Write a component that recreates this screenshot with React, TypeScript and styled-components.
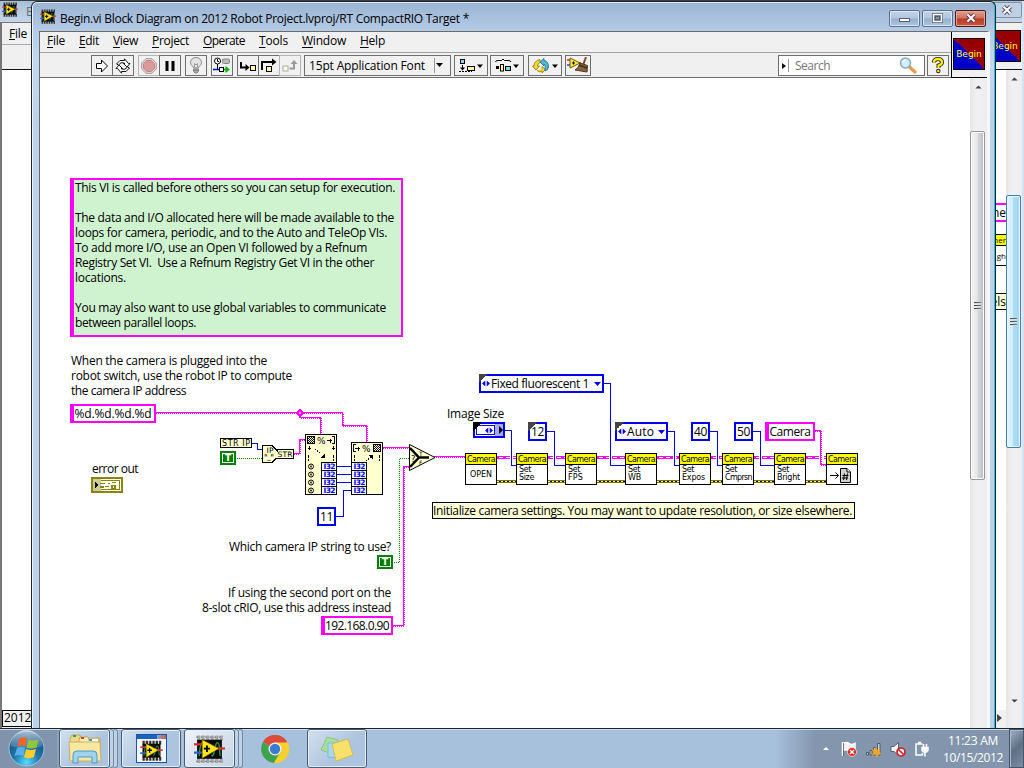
import React, { useLayoutEffect, useRef, useState } from 'react';
import styled, { createGlobalStyle, css } from 'styled-components';

const PINK = '#ff00ff';
const BLUE = '#0000f0';
const CREAM = '#ffffd0';
const UI = "'Open Sans', 'Noto Sans', sans-serif";
const SMALL = "'DejaVu Sans', sans-serif";

const Global = createGlobalStyle`
  * { box-sizing: border-box; }
  body { margin: 0; overflow: hidden; font: 12px/15px ${UI}; color: #000; }
  svg { display: block; }
`;

/* Text tracked so that it takes up a given width. */
const Run = styled.span`
  display: inline-block;
  white-space: pre;
`;
function Fit({ w, children }: { w: number; children: React.ReactNode }) {
  const ref = useRef<HTMLSpanElement>(null);
  const [ls, setLs] = useState(0);
  useLayoutEffect(() => {
    const el = ref.current!;
    const n = (el.textContent || '').length;
    setLs((w - el.getBoundingClientRect().width) / n);
  }, [w]);
  return <Run ref={ref} style={{ letterSpacing: `${ls}px` }}>{children}</Run>;
}

/* ---------- desktop ---------- */
const Screen = styled.div`
  width: 1024px; height: 768px;
  display: flex; flex-direction: column;
  background: #3a3f46;
`;
const Desktop = styled.div`
  position: relative; height: 728px; overflow: hidden; flex: none;
`;

/* ---------- rear window ---------- */
const RearWindow = styled.div`
  position: absolute; left: 0; top: 1px; width: 1024px; height: 727px;
  display: flex; flex-direction: column;
  background: linear-gradient(#a9bfd9, #c6d7e9 22px, #c9d9eb);
  border-right: 2px solid #d4e2f2;
`;
const RearTitle = styled.div`
  height: 21px; display: flex; align-items: center; padding: 0 0 4px 2px; flex: none;
  color: #66707c;
`;
const RearName = styled.div` margin-left: 8px; flex: 1; padding-top: 3px; `;
const RearClose = styled.div`
  width: 30px; height: 16px; border: 1px solid #8193aa; border-radius: 2px;
  background: #c0d0e3; display: flex; justify-content: center; align-items: center;
`;
const RearClient = styled.div`
  flex: 1; border: 1px solid #777; border-width: 1px 0 0 2px; background: #fff;
  display: flex; flex-direction: column; min-height: 0;
`;
const RearHead = styled.div`
  height: 47px; background: #f0f0f0; border-bottom: 1px solid #111; flex: none;
  display: flex; justify-content: space-between;
`;
const RearMenus = styled.div`
  flex: 1;
  border-bottom: 1px solid #aaa; height: 22px; padding: 3px 7px;
`;
const RearIcon = styled.div` padding: 7px 1px 0 0; `;
const RearBody = styled.div` flex: 1; display: flex; min-height: 0; `;
const RearPaper = styled.div`
  flex: 1; display: flex; flex-direction: column; justify-content: flex-end;
`;
const Peek = styled.div`
  display: flex; flex-direction: column; align-items: flex-end; flex: 1; padding-top: 133px;
`;
const PeekBox = styled.div<{ $h: number; $c: string; $bg: string; $gap?: number; $bw?: number; $fs?: number }>`
  width: 40px; height: ${p => p.$h}px; margin-top: ${p => p.$gap || 0}px;
  border: solid ${p => p.$c}; border-width: ${p => p.$bw || 1}px 0;
  background: ${p => p.$bg}; text-align: right; overflow: hidden;
  font-size: ${p => p.$fs || 12}px; line-height: ${p => p.$h - 2 * (p.$bw || 1)}px;
`;
const RearFoot = styled.div` display: flex; background: #f0f0f0; height: 18px; flex: none; `;
const RearStatus = styled.div`
  height: 17px; width: 100px; border: 1px solid #000; background: #f0f0f0; line-height: 14px; padding-left: 1px;
`;
const FootArrow = styled.div` margin-left: auto; width: 9px; padding-top: 4px; `;

/* ---------- scroll bars ---------- */
const Track = styled.div<{ $w: number }>`
  width: ${p => p.$w}px; background: linear-gradient(90deg, #e6e6e6, #f1f1f1 40%, #ededed);
  display: flex; flex-direction: column; align-items: flex-start; flex: none;
`;
const Arrow = styled.div<{ $h: number; $dir?: 'down' }>`
  height: ${p => p.$h}px; width: 16px; display: flex; justify-content: center; padding-top: 7px;
  svg { transform: ${p => (p.$dir === 'down' ? 'scaleY(-1)' : 'none')}; }
`;
const Thumb = styled.div<{ $h: number; $blue?: boolean }>`
  width: 15px; height: ${p => p.$h}px; border-radius: 2px;
  display: flex; flex-direction: column; justify-content: center; align-items: center; gap: 1px;
  border: 1px solid ${p => (p.$blue ? '#3c7fb1' : '#979797')};
  box-shadow: inset 0 0 0 1px ${p => (p.$blue ? '#e8f7ff' : '#fbfbfb')};
  background: ${p => p.$blue
    ? 'linear-gradient(90deg, #e3f4fc, #d0edfb 45%, #a9dcf5 50%, #a3d8f2)'
    : 'linear-gradient(90deg, #f5f5f5, #e6e6e8 45%, #d2d3d6 60%, #bbbdc0)'};
`;
const Grip = styled.i`
  width: 7px; height: 2px; background: linear-gradient(90deg, #444, #777); border-bottom: 1px solid #ddd;
`;
const Grips = () => <><Grip /><Grip /><Grip /></>;
const ArrowSvg = () => (
  <svg width="7" height="4" viewBox="0 0 8 5"><path d="M0 4.500L4 0.500L8 4.500Z" fill="#444" /></svg>
);

/* ---------- front window ---------- */
const Window = styled.div`
  position: absolute; left: 31px; top: 1px; width: 965px; height: 727px;
  padding: 0 5px 0 7px; display: flex; flex-direction: column;
  border: solid #222; border-width: 1px 1px 0 1px; border-radius: 6px 6px 0 0;
  background: linear-gradient(#9ab4d3, #b4cbe5 29px, #c3d8ee 60px, #bcd2ea 120px);
  box-shadow: inset 1px 0 #eaf3fc, inset -1px 0 #19c5ea, inset 0 1px #dce9f6;
`;
const TitleBar = styled.div`
  height: 29px; display: flex; align-items: center; padding: 0 4px 0 1px; flex: none;
`;
const TitleText = styled.div` flex: 1; margin-left: 4px; padding-top: 3px; `;
const Buttons = styled.div` display: flex; gap: 2px; padding-top: 3px; `;
const WinButton = styled.div<{ $close?: boolean }>`
  width: 31px; height: 17px; border-radius: 2px; display: flex; justify-content: center; align-items: center;
  border: 1px solid ${p => (p.$close ? '#4a1b1b' : '#5b7190')};
  box-shadow: inset 0 0 0 1px ${p => (p.$close ? '#eaa597' : '#d9e6f4')};
  background: ${p => p.$close
    ? 'linear-gradient(#e0a294, #cf705c 48%, #b93a22 52%, #c65a42)'
    : 'linear-gradient(#c3d4e8, #b1c6df 48%, #98b0cd 52%, #acc4de)'};
`;
const Client = styled.div`
  flex: 1; min-height: 0; border-left: 1px solid #6b6b6b; border-top: 1px solid #6b6b6b;
  border-right: 3px solid #f4f8fd; background: #fff; display: flex; flex-direction: column;
`;
const Head = styled.div` height: 46px; display: flex; flex: none; background: #f0f0f0; `;
const Bars = styled.div` flex: 1; display: flex; flex-direction: column; `;
const MenuBar = styled.div`
  height: 21px; border-bottom: 1px solid #a0a0a0; display: flex; padding: 1px 0 0 7px; flex: none;
`;
const MenuItem = styled.div<{ $w: number }>`
  width: ${p => p.$w}px;
  u { text-underline-offset: 2px; }
`;
const ToolBar = styled.div`
  flex: 1; display: flex; align-items: flex-start; padding-top: 2px;
  border-bottom: 1px solid #6b6b6b;
`;
const Tool = styled.div<{ $w?: number; $gap?: number; $dim?: boolean }>`
  width: ${p => p.$w || 22}px; height: 21px; margin-left: ${p => p.$gap ?? -1}px;
  border: 1px solid ${p => (p.$dim ? '#b5b5b5' : '#6e6e6e')}; background: #f1f1f1;
  display: flex; align-items: center; justify-content: center; flex: none;
`;
const FontPick = styled(Tool)` justify-content: space-between; padding: 0 7px 1px 4px; `;
const Divider = styled.i` width: 1px; height: 15px; background: #999; margin-left: 7px; `;
const SearchBox = styled(Tool)`
  margin-left: auto; background: #fff; justify-content: flex-start; color: #777; padding-left: 3px;
  svg:last-child { margin-left: auto; margin-right: 7px; }
`;
const SearchText = styled.div` padding-left: 6px; `;
const ViPane = styled.div`
  width: 36px; border-left: 1px solid #000; border-bottom: 1px solid #000; padding: 6px 0 0 1px;
`;
const ViBox = styled.div`
  width: 32px; height: 32px; border: 1px solid #000; color: #ffff30;
  background: linear-gradient(45deg, #0000c8 50%, #960000 50%);
  font: 9px/31px ${SMALL}; text-align: center;
`;
const Workspace = styled.div` flex: 1; display: flex; min-height: 0; `;
const Canvas = styled.div` flex: 1; position: relative; overflow: hidden; background: #fff; `;

/* ---------- diagram items; coordinates share the wire layer's system ---------- */
const at = css<{ $x: number; $y: number }>`
  position: absolute; left: ${p => p.$x - 40}px; top: ${p => p.$y - 78}px;
`;
const Wires = styled.svg` position: absolute; left: 0; top: 0; `;
const Label = styled.div<{ $x: number; $y: number }>` ${at} display: flex; flex-direction: column; `;
const RightLabel = styled(Label)` align-items: flex-end; `;
const Note = styled.div<{ $x: number; $y: number }>`
  ${at} width: 333px; height: 159px; padding-left: 1px; background: #cff3cf;
  border: 2px solid ${PINK}; border-left-width: 4px;
  display: flex; flex-direction: column; align-items: flex-start;
`;
const Gap = styled.div` height: 15px; `;
const Caption = styled.div<{ $x: number; $y: number }>`
  ${at} width: 423px; height: 17px; border: 1px solid #000; background: #ffffd8; line-height: 15px;
`;
const Const = styled.div<{ $x: number; $y: number; $w: number; $str?: boolean }>`
  ${at} width: ${p => p.$w}px; height: 19px; background: #fff; line-height: 15px;
  border: 2px solid ${p => (p.$str ? PINK : BLUE)};
  border-left-width: ${p => (p.$str ? 4 : 2)}px; padding-right: ${p => (p.$str ? 2 : 0)}px;
  display: flex; justify-content: center; align-items: center;
`;
const Ring = styled(Const)` justify-content: flex-start; gap: 1px; padding-left: 1px; `;
const Corner = styled.i<{ $dark?: boolean }>`
  position: absolute; left: -2px; top: -2px; width: 9px; height: 9px;
  background: linear-gradient(135deg, ${p => (p.$dark ? '#000' : '#444')} 50%, transparent 50%);
`;
const DropMark = styled.div` margin-left: auto; margin-right: 1px; `;
const Bool = styled.div<{ $x: number; $y: number }>`
  ${at} width: 16px; height: 14px; background: #008000; padding: 2px;
`;
const BoolFace = styled.div`
  height: 10px; border: 1px solid #fff; color: #fff; font: bold 9px/8px ${SMALL}; text-align: center;
`;
const SubVi = styled.div<{ $x: number; $y: number }>`
  ${at} width: 32px; height: 32px; border: 1px solid #000; background: #fff;
  font: 8px/8px ${SMALL}; display: flex; flex-direction: column; overflow: hidden;
`;
const SubHead = styled.div`
  height: 11px; background: #ffff00; border-bottom: 1px solid #000; line-height: 11px; padding-left: 1px; flex: none;
`;
const SubBody = styled.div<{ $mid?: boolean }>`
  flex: 1; display: flex; flex-direction: column; align-items: ${p => (p.$mid ? 'center' : 'flex-start')};
  justify-content: ${p => (p.$mid ? 'center' : 'flex-start')}; padding: ${p => (p.$mid ? '0' : '1px 0 0 2px')};
`;
const ImageSize = styled.div<{ $x: number; $y: number }>`
  ${at} width: 32px; height: 16px; border: 2px solid ${BLUE}; background: #fff; display: flex; padding: 1px 0 1px 1px;
`;
const EnumFace = styled.div`
  flex: 1; border: 1px solid ${BLUE}; display: flex; align-items: center; justify-content: flex-end; padding-right: 1px;
`;
const EnumEdge = styled.div`
  width: 8px; background: #a9a9f2; display: flex; align-items: center; justify-content: flex-end; margin: -1px 0;
`;

/* ---------- icons ---------- */
function LvIcon({ w, h, metal }: { w: number; h: number; metal?: boolean }) {
  return (
    <svg width={w} height={h} viewBox="0 0 30 28">
      <path d="M3 3.500H28M3 25H28" stroke={metal ? '#a5a5a5' : '#333'} strokeWidth="5" strokeDasharray="3 1.400" />
      <path d="M2 2.500H28M2 26H28" stroke={metal ? '#777' : '#999'} strokeWidth="1.300" strokeDasharray="1.500 2.900" />
      <rect x="3" y="5" width="24" height="18.500" fill="#0a0a0a" />
      <path d="M5 21C6 5 9 5 11 12M17 20C20 24 20 6 23 8S24 22 26 20" fill="none" stroke="#2c9a4b" strokeWidth="1.300" />
      <path d="M0 9.500H8" stroke="#e03030" strokeWidth="2.200" />
      <path d="M0 17.500H8" stroke="#3060d0" strokeWidth="2.200" />
      <path d="M21 13.500H30" stroke="#e03030" strokeWidth="2.200" />
      <path d="M8 5L24 13.500L8 23Z" fill="#ffe619" stroke="#806600" strokeWidth=".6" />
      <path d="M12.500 10.500V17M9.500 13.700H15.500" stroke="#000" strokeWidth="1.800" />
    </svg>
  );
}
const Caret = ({ c = '#000' }: { c?: string }) => (
  <svg width="7" height="4" viewBox="0 0 7 4"><path d="M0 0H7L3.500 4Z" fill={c} /></svg>
);
const Updown = () => (
  <svg width="8" height="7" viewBox="0 0 8 7"><path d="M3.300 .5V6.500L0 3.500ZM4.700 .5V6.500L8 3.500Z" fill={BLUE} /></svg>
);
const RunIcon = () => (
  <svg width="14" height="14" viewBox="0 0 14 14"><path d="M1.500 4.500H6.500V1L12.500 7L6.500 13V9.500H1.500Z" fill="#fff" stroke="#000" /></svg>
);
const RunLoopIcon = () => (
  <svg width="18" height="16" viewBox="0 0 18 16" fill="#fff" stroke="#111" strokeWidth="1">
    <path d="M2.500 6L6 2.500H10.500V.8L14.500 5.500H16L13 9L9.500 5.500H11L9.500 4.800H7L4.500 7Z" />
    <path d="M15.500 10L12 13.500H7.500V15.200L3.500 10.500H2L5 7L8.500 10.500H7L8.500 11.200H11L13.500 9Z" />
  </svg>
);
const StopIcon = () => (
  <svg width="16" height="16" viewBox="0 0 16 16">
    <path d="M5 .7H11L15.300 5V11L11 15.300H5L.7 11V5Z" fill="#e9dada" stroke="#999" />
    <path d="M5.700 2.500H10.300L13.500 5.700V10.300L10.300 13.500H5.700L2.500 10.300V5.700Z" fill="#d89a9a" stroke="#c58484" />
  </svg>
);
const PauseIcon = () => (
  <svg width="12" height="12" viewBox="0 0 12 12"><path d="M1.500 1H4.500V11H1.500ZM7.500 1H10.500V11H7.500Z" /></svg>
);
const BulbIcon = () => (
  <svg width="14" height="17" viewBox="0 0 14 17" stroke="#888">
    <path d="M4.500 11C4.500 9 1.500 8.500 1.500 5.500A5.500 5 0 0 1 12.500 5.500C12.500 8.500 9.500 9 9.500 11Z" fill="#e4e4e4" />
    <path d="M5.500 10.500V6.500L7 8L8.500 6.500V10.500" fill="none" strokeWidth=".8" />
    <path d="M4.500 12H9.500V14.500L8 16H6L4.500 14.500ZM4.500 13.500H9.500" fill="#aaa" />
  </svg>
);
const RetainIcon = () => (
  <svg width="18" height="17" viewBox="0 0 18 17" fill="none">
    <circle cx="4.500" cy="4" r="3" stroke="#000" fill="#fff" /><path d="M4.500 2V4.500H6M4.500 7V12" stroke="#000" />
    <rect x="9.500" y="2" width="7" height="4.500" rx="1" fill="#bbb" stroke="#888" />
    <path d="M0 12.500H7" stroke="#0000ff" strokeWidth="1.500" /><rect x="6.500" y="10.500" width="4" height="4" stroke="#000" fill="#fff" />
    <path d="M11 12.500H13" stroke="#009a00" strokeWidth="1.500" /><path d="M12.500 9L17 12.500L12.500 16Z" fill="#00b400" />
  </svg>
);
const StepInto = () => (
  <svg width="18" height="16" viewBox="0 0 18 16"><path d="M2 4V9.500H8" stroke="#000" strokeWidth="2" fill="none" /><path d="M6.500 6L10.500 9.500L6.500 13Z" /><rect x="11.500" y="7.500" width="5" height="5" fill="#ffffa8" stroke="#000" /></svg>
);
const StepOver = () => (
  <svg width="18" height="16" viewBox="0 0 18 16"><path d="M2 12V4H13" stroke="#000" strokeWidth="2" fill="none" /><path d="M12 .5L16.500 4L12 7.500Z" /><rect x="6.500" y="8.500" width="5" height="5" fill="#ffffa8" stroke="#000" /></svg>
);
const StepOut = () => (
  <svg width="18" height="16" viewBox="0 0 18 16"><rect x="2" y="8" width="5" height="5" fill="#ffffdf" stroke="#aaa" /><path d="M8.500 10.500H13V5" stroke="#999" strokeWidth="2" fill="none" /><path d="M9.500 6L13 2L16.500 6Z" fill="#999" /></svg>
);
const AlignIcon = () => (
  <svg width="25" height="16" viewBox="0 0 25 16"><rect x="1.500" y="1.500" width="4" height="4" fill="#7fd8f0" stroke="#000" /><path d="M3.500 7V11" stroke="#000" /><path d="M0 13.500H13" stroke="#000" strokeDasharray="2 1" /><path d="M1 9.500H6L3.500 12.500Z" /><rect x="8.500" y="8.500" width="7" height="4" fill="#ffffa0" stroke="#000" /><path d="M18 6.500H24L21 10Z" /></svg>
);
const DistIcon = () => (
  <svg width="25" height="16" viewBox="0 0 25 16"><path d="M.5 4Q.5 2.500 3 2.500H6.500L8 1L9.500 2.500H13Q16 2.500 16 4" fill="none" stroke="#000" /><rect x="1" y="8" width="3" height="3" /><rect x="5.500" y="6.500" width="3" height="6.500" fill="#ffffa0" stroke="#000" /><rect x="10.500" y="8.500" width="5" height="4" fill="#7fd8f0" stroke="#000" /><path d="M18 6.500H24L21 10Z" /></svg>
);
const ReorderIcon = () => (
  <svg width="27" height="16" viewBox="0 0 27 16">
    <path d="M8 1.500Q2 3 2 8L.5 8L4 12L7.500 8H5.500Q5.500 5 8 4.500Z" fill="#f5dc2a" stroke="#8a7600" strokeWidth=".8" />
    <path d="M5 12.500Q8 15 10 13V15L13.500 11.500L10 8.500V10.500" fill="#f5dc2a" stroke="#8a7600" strokeWidth=".8" />
    <path d="M8 4L12 .5V2.500Q16.500 3 16.500 9Q16 12.500 13 13V9.500Q14 7 12 6V8Z" fill="#52b6d8" stroke="#1f6c8a" strokeWidth=".8" />
    <path d="M20 6.500H26L23 10Z" />
  </svg>
);
const CleanIcon = () => (
  <svg width="22" height="17" viewBox="0 0 22 17">
    <path d="M0 3H4M14 6H11" stroke="#e02020" strokeWidth="1.500" /><path d="M0 8H3" stroke="#2040e0" strokeWidth="1.500" />
    <path d="M3 1L13 6L3 11Z" fill="#ffe83a" stroke="#6b5b00" /><path d="M5 6H8M6.500 4.500V7.500" stroke="#000" />
    <path d="M19 0L16.500 7" stroke="#7a5230" strokeWidth="2" /><path d="M13 6L20.500 8.500L20 15L8 13Q12 11 13 6Z" fill="#8a6238" stroke="#543816" /><path d="M12 8L20 11" stroke="#333" strokeWidth="1.500" />
  </svg>
);
const GlassIcon = () => (
  <svg width="18" height="17" viewBox="0 0 18 17"><path d="M10.500 10L16 15" stroke="#e79a4a" strokeWidth="3.200" strokeLinecap="round" /><circle cx="6.500" cy="6" r="5" fill="#cdefff" stroke="#86a6c4" strokeWidth="1.500" /><path d="M3.500 5.500Q4 3.500 6.500 3.200" stroke="#fff" strokeWidth="1.500" fill="none" /></svg>
);
const HelpIcon = () => (
  <svg width="12" height="17" viewBox="0 0 12 17"><path d="M2 5.500Q2 2 6 2T10 5.500Q10 7.500 6.500 8.500V11" fill="none" stroke="#222" strokeWidth="4" /><circle cx="6.300" cy="14" r="2.200" fill="#222" /><path d="M2 5.500Q2 2 6 2T10 5.500Q10 7.500 6.500 8.500V11" fill="none" stroke="#ffee00" strokeWidth="2.300" /><circle cx="6.300" cy="14" r="1.300" fill="#ffee00" /></svg>
);
const CrossIcon = ({ edge = '#4a4f5c' }: { edge?: string }) => (
  <svg width="12" height="10" viewBox="0 0 12 10"><path d="M2.500 1.500L9.500 8.500M9.500 1.500L2.500 8.500" stroke={edge} strokeWidth="4" /><path d="M2.500 1.500L9.500 8.500M9.500 1.500L2.500 8.500" stroke="#fff" strokeWidth="2" /></svg>
);

/* ---------- wires ---------- */
const StringWire = ({ d }: { d: string }) => (
  <g fill="none" stroke={PINK}>
    <path d={d} strokeWidth="2" strokeDasharray="1 1" />
    <path d={d} transform="translate(-.5 -.5)" strokeWidth="1" />
  </g>
);
const RefWire = ({ a, b }: { a: number; b: number }) => (
  <g><rect x={a} y="456" width={b - a} height="3" fill={PINK} /><path d={`M${a + 2} 457.500H${b}`} stroke="#fff" strokeDasharray="4 3" /></g>
);
const ErrWire = ({ a, b }: { a: number; b: number }) => (
  <g><rect x={a} y="480" width={b - a} height="3" fill="#7c7600" /><path d={`M${a} 481.500H${b}`} stroke="#fff46a" strokeDasharray="2 2" /><path d={`M${a + 2} 481.500H${b}`} stroke="#000" strokeDasharray="2 2" /></g>
);
const I32 = ({ x, y }: { x: number; y: number }) => (
  <g>
    <rect x={x + .5} y={y + .5} width="15" height="8" fill="#fff" stroke="#000" />
    <text x={x + 2.500} y={y + 7.300} fontFamily={SMALL} fontSize="7.500" fontWeight="700" textLength="12" fill={BLUE}>I32</text>
  </g>
);
const gaps: [number, number][] = [[497, 516], [548, 565], [597, 625], [657, 679], [711, 722], [754, 774], [806, 826]];
const blueWires = [
  'M604 383.500H610.500V465.500H625', 'M505 430.500H511.500V465.500H516', 'M547 431.500H554.500V465.500H565',
  'M668 431.500H674.500V465.500H679', 'M710 431.500H717.500V465.500H722', 'M753 431.500H760.500V465.500H774',
];

function WireLayer() {
  return (
    <Wires width="930" height="650" viewBox="40 78 930 650" shapeRendering="crispEdges">
      <defs>
        <pattern id="chk" width="2" height="2" patternUnits="userSpaceOnUse"><rect width="1" height="1" /><rect x="1" y="1" width="1" height="1" /></pattern>
      </defs>
      <StringWire d="M156 413H343V426H367V442" />
      <StringWire d="M300 413V418H321V434" />
      <path d="M300 410L303 413L300 416L297 413Z" fill="#ff9cff" stroke={PINK} strokeWidth="1.500" />
      <StringWire d="M294 454H300V440H305" />
      <StringWire d="M383 448H410" />
      <StringWire d="M409 467H404V626H393" />
      <StringWire d="M434 457H465" />
      {gaps.map(([a, b]) => <g key={a}><RefWire a={a} b={b} /><ErrWire a={a} b={b} /></g>)}
      {blueWires.map(d => (
        <g key={d} fill="none"><path d={d} stroke="#fff" strokeWidth="3" /><path d={d} stroke={BLUE} /></g>
      ))}
      <path d="M821.500 433V464" stroke="#fff" strokeWidth="5" />
      <StringWire d="M815 431H821V465H826" />
      <g fill="none" stroke={BLUE}>
        <path d="M252 443.500H257.500V449.500H262M337 466.500H351M337 474.500H351M337 482.500H351M351 490.500H343.500V516.500H336" />
      </g>
      <g fill="none" stroke="#008000" strokeDasharray="1 1">
        <path d="M237 458.500H262M409 458.500H399.500V562.500H393" />
      </g>

      {/* string-to-IP property and conversion nodes */}
      <rect x="220.500" y="438.500" width="31" height="9" fill={CREAM} stroke="#000" />
      <text x="222" y="446" fontFamily={SMALL} fontSize="8" textLength="28">STR IP</text>
      <path d="M262.500 445.500H272L277.500 451V457L272 462.500H262.500Z" fill={CREAM} stroke="#000" />
      <rect x="277.500" y="449.500" width="16" height="9" fill={CREAM} stroke="#000" />
      <path d="M275 451.500H279V458H275Z" fill={CREAM} />
      <text x="266.500" y="453" fontFamily={SMALL} fontSize="7.500" textLength="7">IP</text>
      <text x="264" y="461" fontFamily={SMALL} fontSize="8" textLength="10">".."</text>
      <text x="277.500" y="457" fontFamily={SMALL} fontSize="7.500" textLength="15">STR</text>

      {/* scan from string */}
      <rect x="305.500" y="434.500" width="31" height="60" fill={CREAM} stroke="#000" />
      <rect x="307.500" y="436.500" width="7" height="7" fill="url(#chk)" stroke="#000" />
      <text x="317" y="444" fontFamily={SMALL} fontSize="9">%</text>
      <path d="M327 440.500H332M330.500 438.500V443M332 436.500H334.500V443.500H332" stroke="#000" fill="none" />
      <path d="M309.500 446V450M308 448.500H311M333.500 446V450M332 448.500H335M308.500 455V458M308.500 459V460.500M333.500 455V458M333.500 459V460.500" stroke="#000" />
      <path d="M315 449L321 454" stroke="#000" strokeDasharray="1.400 1.400" /><path d="M325 453V458H320Z" />
      {[466, 474, 482, 490].map(y => <g key={y} shapeRendering="auto"><circle cx="311" cy={y + .5} r="2.500" fill="none" stroke="#000" /><circle cx="311" cy={y + .5} r=".9" /></g>)}
      {[462, 470, 478, 486].map(y => <I32 key={y} x={321} y={y} />)}

      {/* format into string */}
      <rect x="351.500" y="442.500" width="31" height="52" fill={CREAM} stroke="#000" />
      <path d="M356 444.500H353.500V451.500H356M355 448.500H360M358.500 446.500V450.500" stroke="#000" fill="none" />
      <text x="362" y="452" fontFamily={SMALL} fontSize="9">%</text>
      <rect x="373.500" y="444.500" width="7" height="7" fill="url(#chk)" stroke="#000" />
      <path d="M354.500 455V458M354.500 459V460.500M379.500 455V458M379.500 459V460.500" stroke="#000" />
      <path d="M366 461L371 457" stroke="#000" strokeDasharray="1.400 1.400" /><path d="M368 455H373V460Z" />
      {[462, 470, 478, 486].map(y => <I32 key={y} x={351} y={y} />)}

      {/* selector */}
      <g shapeRendering="auto">
        <path d="M409.500 444.500V470.500L435 457.500Z" fill={CREAM} stroke="#000" />
        <path d="M410 448L419 457.500H429M410 467L419 457.500" fill="none" stroke="#000" strokeWidth="2.500" />
        <text x="411" y="461.500" fontFamily={SMALL} fontSize="8.500">?</text>
        <text x="419" y="455.500" fontFamily={SMALL} fontSize="6">T</text>
        <text x="419" y="464.500" fontFamily={SMALL} fontSize="6">F</text>
      </g>

      {/* error cluster terminal */}
      <rect x="92" y="478" width="30" height="14" fill="#fff" stroke="#8a8400" strokeWidth="2" />
      <rect x="94.500" y="480.500" width="25" height="9" fill="none" stroke="#8a8400" />
      <rect x="93" y="479" width="8" height="12" fill="#cccb9c" /><path d="M95 482L99 485L95 488Z" />
      <path d="M100 483.500H105M100 487H104M108 483.500H110M112 482.500H116M105 486.500H109M112 485.500H115V488.500H112Z" stroke="#8a8400" strokeWidth="1.500" fill="none" />
    </Wires>
  );
}

const cameras: { x: number; a: string; b?: string; w: number }[] = [
  { x: 465, a: 'OPEN', w: 22 }, { x: 516, a: 'Set', b: 'Size', w: 15 }, { x: 565, a: 'Set', b: 'FPS', w: 15 },
  { x: 625, a: 'Set', b: 'WB', w: 13 }, { x: 679, a: 'Set', b: 'Expos', w: 23 }, { x: 722, a: 'Set', b: 'Cmprsn', w: 27 },
  { x: 774, a: 'Set', b: 'Bright', w: 23 }, { x: 826, a: '', w: 0 },
];

function Diagram() {
  return (
    <Canvas>
      <WireLayer />
      <Note $x={70} $y={178}>
        <Fit w={320}>This VI is called before others so you can setup for execution.</Fit>
        <Gap />
        <Fit w={319}>The data and I/O allocated here will be made available to the</Fit>
        <Fit w={312}>loops for camera, periodic, and to the Auto and TeleOp VIs.</Fit>
        <Fit w={292}>To add more I/O, use an Open VI followed by a Refnum</Fit>
        <Fit w={299}>Registry Set VI.  Use a Refnum Registry Get VI in the other</Fit>
        <Fit w={51}>locations.</Fit>
        <Gap />
        <Fit w={311}>You may also want to use global variables to communicate</Fit>
        <Fit w={121}>between parallel loops.</Fit>
      </Note>
      <Label $x={71} $y={353}>
        <div><Fit w={196}>When the camera is plugged into the</Fit></div>
        <div><Fit w={221}>robot switch, use the robot IP to compute</Fit></div>
        <div><Fit w={115}>the camera IP address</Fit></div>
      </Label>
      <Const $x={70} $y={404} $w={86} $str><Fit w={77}>%d.%d.%d.%d</Fit></Const>
      <Label $x={92} $y={461}><Fit w={46}>error out</Fit></Label>
      <Bool $x={220} $y={451}><BoolFace>T</BoolFace></Bool>
      <Const $x={317} $y={507} $w={19}><Fit w={13}>11</Fit></Const>
      <Label $x={229} $y={539}><Fit w={162}>Which camera IP string to use?</Fit></Label>
      <Bool $x={377} $y={555}><BoolFace>T</BoolFace></Bool>
      <RightLabel $x={202} $y={585}>
        <Fit w={163}>If using the second port on the</Fit>
        <Fit w={189}>8-slot cRIO, use this address instead</Fit>
      </RightLabel>
      <Const $x={321} $y={616} $w={72} $str><Fit w={64}>192.168.0.90</Fit></Const>

      <Ring $x={479} $y={374} $w={125}><Corner /><Updown /><Fit w={98}>Fixed fluorescent 1</Fit><DropMark><Caret c={BLUE} /></DropMark></Ring>
      <Label $x={447} $y={406}><Fit w={57}>Image Size</Fit></Label>
      <ImageSize $x={473} $y={422}>
        <EnumFace><Updown /></EnumFace>
        <EnumEdge><svg width="4" height="8" viewBox="0 0 4 8"><path d="M0 0L4 4L0 8Z" /></svg></EnumEdge>
        <Corner $dark />
      </ImageSize>
      <Const $x={528} $y={422} $w={19}><Corner /><Fit w={13}>12</Fit></Const>
      <Ring $x={615} $y={422} $w={53}><Corner /><Updown /><Fit w={27}>Auto</Fit><DropMark><Caret c={BLUE} /></DropMark></Ring>
      <Const $x={691} $y={422} $w={19}><Fit w={13}>40</Fit></Const>
      <Const $x={734} $y={422} $w={19}><Fit w={13}>50</Fit></Const>
      <Const $x={765} $y={422} $w={50} $str><Fit w={41}>Camera</Fit></Const>

      {cameras.map(c => (
        <SubVi key={c.x} $x={c.x} $y={453}>
          <SubHead><Fit w={28}>Camera</Fit></SubHead>
          {c.b ? <SubBody><Fit w={12}>{c.a}</Fit><Fit w={c.w}>{c.b}</Fit></SubBody>
            : c.a ? <SubBody $mid><Fit w={c.w}>{c.a}</Fit></SubBody>
              : <SubBody $mid>
                <svg width="24" height="16" viewBox="0 0 24 16"><path d="M0 8.500H8M5.500 5.500L8.500 8.500L5.500 11.500" stroke="#000" fill="none" /><path d="M10.500 1.500H17L20.500 5V15.500H10.500Z" fill="#d0d0d0" stroke="#000" /><path d="M17 1.500V5H20.500" fill="#fff" stroke="#000" /><path d="M14.500 6.500L13.500 13M17.500 6.500L16.500 13M12.500 8.500H18.500M12 11H18" stroke="#000" /></svg>
              </SubBody>}
        </SubVi>
      ))}
      <Caption $x={432} $y={502}><Fit w={419}>Initialize camera settings. You may want to update resolution, or size elsewhere.</Fit></Caption>
    </Canvas>
  );
}

/* ---------- taskbar ---------- */
const TaskBar = styled.div`
  height: 40px; display: flex; border-top: 1px solid #1d2530; flex: none; align-items: stretch;
  box-shadow: inset 0 1px #cfdeee;
  background: linear-gradient(90deg, #8093aa 0, #8195ae 56px, #a7c0dc 64px, #a7c0dc 775px, #8396ae 815px, #8295ac);
`;
const Start = styled.div` width: 59px; display: flex; padding: 1px 0 0 8px; `;
const Task = styled.div<{ $w: number; $gap?: number; $active?: boolean }>`
  width: ${p => p.$w}px; margin-left: ${p => p.$gap || 0}px; height: 39px; border-radius: 3px;
  display: flex; justify-content: center; align-items: center;
  border: 1px solid #4a5d75; box-shadow: inset 0 0 0 1px #e4eef8;
  background: ${p => p.$active ? 'linear-gradient(135deg, #eef4fa, #c3d3e4)' : 'linear-gradient(135deg, #d3e0ef, #adc4de 60%)'};
`;
const Stack = styled.div`
  width: 4px; height: 39px; border: solid #7488a1; border-width: 1px 1px 1px 0; border-radius: 0 3px 3px 0; background: #bfd1e5;
`;
const Plain = styled.div<{ $w: number }>` width: ${p => p.$w}px; display: flex; justify-content: center; align-items: center; `;
const Tray = styled.div` margin-left: auto; display: flex; align-items: center; gap: 8px; `;
const Expand = styled.div` margin-right: 3px; `;
const Clock = styled.div`
  color: #fff; width: 66px; height: 39px; display: flex; flex-direction: column; align-items: center;
  padding-top: 4px; gap: 2px; margin-left: 2px;
`;
const ShowDesktop = styled.div`
  width: 15px; margin-left: 3px; border: 1px solid #47566a; box-shadow: inset 1px 1px #a9b9cb;
  background: linear-gradient(135deg, #a2b1c3, #5f7086 50%, #7d8ea4);
`;

function StartOrb() {
  return (
    <svg width="37" height="37" viewBox="0 0 37 37">
      <defs>
        <radialGradient id="orb" cx=".5" cy=".9" r=".9"><stop offset="0" stopColor="#58dcff" /><stop offset=".4" stopColor="#2179ae" /><stop offset="1" stopColor="#1a3c66" /></radialGradient>
        <linearGradient id="gl" x1="0" y1="0" x2="0" y2="1"><stop offset="0" stopColor="#dcebf7" stopOpacity=".8" /><stop offset="1" stopColor="#9dbfdd" stopOpacity=".25" /></linearGradient>
      </defs>
      <circle cx="18.500" cy="18.500" r="17.500" fill="url(#orb)" stroke="#9bc3df" />
      <path d="M2.500 16A16 16 0 0 1 34.500 16Q19 21 2.500 16Z" fill="url(#gl)" />
      <path d="M11.500 8.500Q15 6 19 8.500L17.500 16.500Q13.500 14.500 9.500 16.500Z" fill="#f0662a" />
      <path d="M20.500 9.500Q25 11.500 30.500 9.500L28.500 17.500Q23 19.500 18.500 17.500Z" fill="#93c83e" />
      <path d="M9 18Q13 16 17 18L15.500 26Q11 24 6.500 26Z" fill="#58b0ea" />
      <path d="M18 19Q23 21 28 19L26 27Q21 29.500 16 27Z" fill="#fccd30" />
    </svg>
  );
}
const Explorer = () => (
  <svg width="34" height="32" viewBox="0 0 34 32">
    <path d="M2 6L4 2H12L13 5H32V26H2Z" fill="#efd98a" stroke="#b79c47" strokeWidth=".8" />
    <path d="M11 7L12 4H20L21 7H31V12H11Z" fill="#f8ecb5" stroke="#b79c47" strokeWidth=".8" />
    <path d="M5 2H8V4H5Z" fill="#2ba84a" /><path d="M13 4H16V6H13Z" fill="#d8442c" /><path d="M21 6H30V8H21Z" fill="#fff" /><path d="M21 6H24V8H21Z" fill="#3a9ad8" />
    <path d="M1 9H32L33 28H2Z" fill="#f7e7a0" stroke="#c3a650" strokeWidth=".8" />
    <path d="M5 30V22Q5 18 9 18H25Q29 18 29 22V30H24V24H10V30Z" fill="#9fd4ee" stroke="#4f9ac4" />
  </svg>
);
const LvWindow = styled.div`
  width: 31px; height: 29px; border: 1px solid #1855a8; background: #f4f6f8; display: flex; flex-direction: column; align-items: center;
  &::before { content: ''; width: 100%; height: 4px; background: linear-gradient(90deg, #1763be 70%, #77a7e4 70%, #d25c40); margin-bottom: 1px; }
`;
const Chrome = () => (
  <svg width="30" height="30" viewBox="0 0 30 30">
    <path d="M15 15L2.900 8A14 14 0 0 1 27.100 8Z" fill="#dd4b3c" /><path d="M3 8A14 14 0 0 1 27.400 8.500H15Z" fill="#dd4b3c" />
    <path d="M15 15L27.400 8.500A14 14 0 0 1 14 29Z" fill="#f7cf2e" /><path d="M15 15L14 29A14 14 0 0 1 3 8Z" fill="#3fa24c" />
    <path d="M15 8.500H27.400L20 16Z" fill="#f7cf2e" /><path d="M14 29L20.500 18L15 15L9 18Z" fill="#3fa24c" /><path d="M14 29L20.500 18V12L27.400 8.500A14 14 0 0 1 14 29Z" fill="#f7cf2e" />
    <circle cx="15" cy="15" r="6.500" fill="#f5f5f5" /><circle cx="15" cy="15" r="5.200" fill="#3b7bd0" />
  </svg>
);
const Sticky = () => (
  <svg width="34" height="28" viewBox="0 0 34 28"><path d="M7 2L18 5L13 19L1 15Z" fill="#a7dd9a" stroke="#79ba74" strokeWidth=".7" /><path d="M8 8H20V23L8 22Z" fill="#a5d8f5" stroke="#77b4da" strokeWidth=".7" /><path d="M12 9L28 4L33 20L16 26Z" fill="#f8e06a" stroke="#cdb23e" strokeWidth=".7" /></svg>
);

function Bar() {
  return (
    <TaskBar>
      <Start><StartOrb /></Start>
      <Task $w={51}><Explorer /></Task><Stack /><Stack />
      <Task $w={60} $gap={3}><LvWindow><LvIcon w={23} h={21} /></LvWindow></Task>
      <Task $w={51} $gap={3} $active><LvIcon w={31} h={30} metal /></Task><Stack /><Stack />
      <Plain $w={64}><Chrome /></Plain>
      <Task $w={60}><Sticky /></Task>
      <Tray>
        <Expand><svg width="8" height="5" viewBox="0 0 8 5"><path d="M0 4.500L4 .5L8 4.500Z" fill="#fff" stroke="#56677c" strokeWidth=".5" /></svg></Expand>
        <svg width="16" height="16" viewBox="0 0 16 16"><path d="M1.500 1V15M2 2.500Q6 .5 8 2.500T14 2.500V9.500Q11 11 8 9.500T2 9.500" fill="#eef2f7" stroke="#fff" strokeWidth="1.500" /><path d="M2.500 2V15" stroke="#3b4652" strokeWidth=".7" /><circle cx="11" cy="11" r="4.500" fill="#d93025" stroke="#fff" strokeWidth=".6" /><path d="M9 9L13 13M13 9L9 13" stroke="#fff" strokeWidth="1.400" /></svg>
        <svg width="17" height="16" viewBox="0 0 17 16"><path d="M1.500 11.500H3.500V14H1.500ZM5 9.500H7V14H5ZM8.500 6.500H10.500V14H8.500ZM12.500 2.500H15V14H12.500Z" fill="#c6ced8" stroke="#3d4855" strokeWidth=".8" /><path d="M11 6L12.300 8.800L15.500 8L14.300 11L16.500 13L13.500 13.500L12 16L10.500 13.500L7 14L8.500 11L6.500 8.500L9.700 8.800Z" fill="#f7a51c" /></svg>
        <svg width="16" height="16" viewBox="0 0 16 16"><path d="M1 5.500H4L8.500 1.500V14.500L4 10.500H1Z" fill="#f2f5f8" stroke="#3d4855" strokeWidth=".8" /><circle cx="11" cy="11" r="4" fill="#fff" stroke="#d32020" strokeWidth="1.700" /><path d="M8.500 8.500L13.500 13.500" stroke="#d32020" strokeWidth="1.700" /></svg>
        <svg width="16" height="16" viewBox="0 0 16 16" fill="none" stroke="#fff" strokeWidth="1.500"><path d="M8.500 3H2V14H8.500V12M4 1.500H7" /><path d="M8 6.500H14V9Q13.500 11 11 11T8 9ZM9.500 3V6M12.500 3V6M11 11V15.500" fill="#fff" /></svg>
        <Clock><Fit w={50}>11:23 AM</Fit><Fit w={60}>10/15/2012</Fit></Clock>
      </Tray>
      <ShowDesktop />
    </TaskBar>
  );
}

const menus: [string, number, number][] = [
  ['File', 18, 32], ['Edit', 20, 34], ['View', 25, 39], ['Project', 37, 51], ['Operate', 42, 56], ['Tools', 29, 43], ['Window', 44, 58], ['Help', 25, 40],
];
const ToolEnd = styled.i` width: 2px; flex: none; `;
const SearchRule = styled.i` width: 1px; height: 13px; background: #999; margin-left: 2px; `;

export default function App() {
  return (
    <Screen>
      <Global />
      <Desktop>
        <RearWindow>
          <RearTitle><LvIcon w={16} h={15} /><RearName>B</RearName><RearClose><CrossIcon /></RearClose></RearTitle>
          <RearClient>
            <RearHead><RearMenus><Fit w={18}><u>F</u>ile</Fit></RearMenus><RearIcon><ViBox>Begin</ViBox></RearIcon></RearHead>
            <RearBody>
              <RearPaper>
                <Peek>
                  <PeekBox $h={19} $c={PINK} $bg="#fff" $bw={2}>ne</PeekBox>
                  <PeekBox $h={12} $c="#000" $bg="#ff0" $gap={12} $fs={8}>ner</PeekBox>
                  <PeekBox $h={21} $c="#000" $bg="#fff" $gap={-1} $fs={8}>gh</PeekBox>
                  <PeekBox $h={17} $c="#000" $bg="#ffffd8" $gap={27}>els</PeekBox>
                </Peek>
                <RearFoot>
                  <RearStatus>2012</RearStatus>
                  <FootArrow><svg width="5" height="8" viewBox="0 0 5 8"><path d="M0 0L5 4L0 8Z" fill="#444" /></svg></FootArrow>
                </RearFoot>
              </RearPaper>
              <Track $w={16}>
                <Arrow $h={125}><ArrowSvg /></Arrow>
                <Thumb $h={253} $blue><Grips /></Thumb>
                <Arrow $h={244} />
                <Arrow $h={20} $dir="down"><ArrowSvg /></Arrow>
              </Track>
            </RearBody>
          </RearClient>
        </RearWindow>

        <Window>
          <TitleBar>
            <LvIcon w={16} h={15} />
            <TitleText><Fit w={409}>Begin.vi Block Diagram on 2012 Robot Project.lvproj/RT CompactRIO Target *</Fit></TitleText>
            <Buttons>
              <WinButton><svg width="11" height="10"><rect x=".5" y="5.500" width="10" height="3" fill="#fff" stroke="#555f70" /></svg></WinButton>
              <WinButton><svg width="11" height="10"><rect x="1.500" y="1.500" width="8" height="7" fill="none" stroke="#555f70" strokeWidth="3" /><rect x="1.500" y="1.500" width="8" height="7" fill="none" stroke="#fff" strokeWidth="1.500" /><rect x="3.500" y="3.500" width="4" height="3" fill="#7f93ad" stroke="#555f70" /></svg></WinButton>
              <WinButton $close><CrossIcon edge="#5a3a40" /></WinButton>
            </Buttons>
          </TitleBar>
          <Client>
            <Head>
              <Bars>
                <MenuBar>
                  {menus.map(([t, w, step]) => <MenuItem key={t} $w={step}><Fit w={w}><u>{t[0]}</u>{t.slice(1)}</Fit></MenuItem>)}
                </MenuBar>
                <ToolBar>
                  <Tool $gap={51}><RunIcon /></Tool><Tool><RunLoopIcon /></Tool>
                  <Tool $gap={4} $dim><StopIcon /></Tool><Tool><PauseIcon /></Tool>
                  <Tool $gap={4}><BulbIcon /></Tool>
                  <Tool $gap={4}><RetainIcon /></Tool>
                  <Tool $gap={4}><StepInto /></Tool><Tool><StepOver /></Tool><Tool $dim><StepOut /></Tool>
                  <FontPick $w={147} $gap={3}><Fit w={116}>15pt Application Font</Fit><Divider /><Caret /></FontPick>
                  <Tool $w={34} $gap={3}><AlignIcon /></Tool>
                  <Tool $w={34} $gap={2}><DistIcon /></Tool>
                  <Tool $w={34} $gap={4}><ReorderIcon /></Tool>
                  <Tool $w={26} $gap={3}><CleanIcon /></Tool>
                  <SearchBox $w={147}>
                    <svg width="4" height="6" viewBox="0 0 4 6"><path d="M0 0L4 3L0 6Z" /></svg>
                    <SearchRule /><SearchText><Fit w={35}>Search</Fit></SearchText><GlassIcon />
                  </SearchBox>
                  <Tool $gap={2}><HelpIcon /></Tool><ToolEnd />
                </ToolBar>
              </Bars>
              <ViPane><ViBox>Begin</ViBox></ViPane>
            </Head>
            <Workspace>
              <Diagram />
              <Track $w={17}>
                <Arrow $h={53}><ArrowSvg /></Arrow>
                <Thumb $h={349}><Grips /></Thumb>
              </Track>
            </Workspace>
          </Client>
        </Window>
      </Desktop>
      <Bar />
    </Screen>
  );
}
